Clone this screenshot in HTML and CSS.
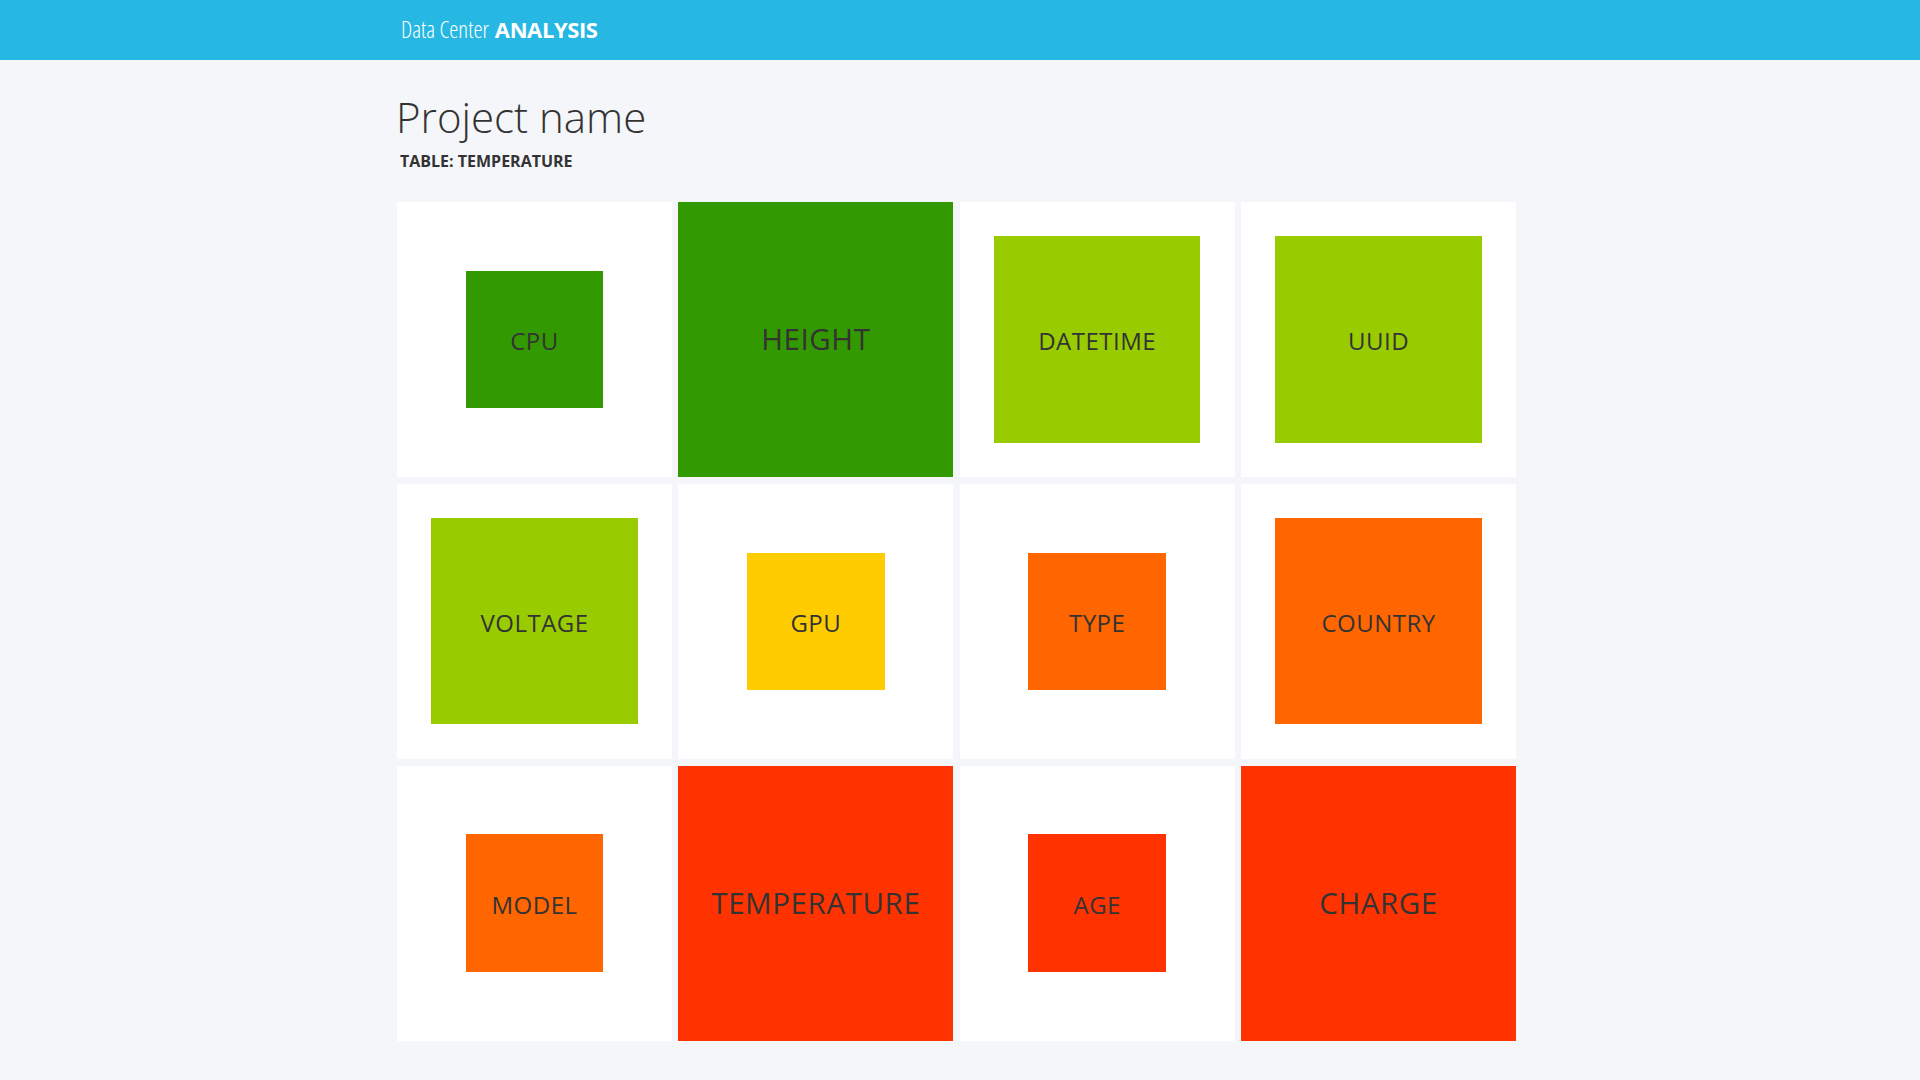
FILE: index.html
```html
<!DOCTYPE html>
<html lang="en">
<head>
<meta charset="utf-8">
<title>Data Center ANALYSIS</title>
<link rel="stylesheet" href="styles.css">
</head>
<body>
<header class="topbar">
  <div class="container">
    <span class="brand"><span class="brand-light">Data Center</span> <span class="brand-bold">ANALYSIS</span></span>
  </div>
</header>
<main class="container">
  <h1 class="title">Project name</h1>
  <div class="subtitle">TABLE: TEMPERATURE</div>
  <section class="grid">
    <div class="tile"><div class="box s50 c-green"><span>CPU</span></div></div>
    <div class="tile"><div class="box s100 c-green big"><span>HEIGHT</span></div></div>
    <div class="tile"><div class="box s75 c-lime"><span>DATETIME</span></div></div>
    <div class="tile"><div class="box s75 c-lime"><span>UUID</span></div></div>

    <div class="tile"><div class="box s75 c-lime"><span>VOLTAGE</span></div></div>
    <div class="tile"><div class="box s50 c-yellow"><span>GPU</span></div></div>
    <div class="tile"><div class="box s50 c-orange"><span>TYPE</span></div></div>
    <div class="tile"><div class="box s75 c-orange"><span>COUNTRY</span></div></div>

    <div class="tile"><div class="box s50 c-orange"><span>MODEL</span></div></div>
    <div class="tile"><div class="box s100 c-red big"><span>TEMPERATURE</span></div></div>
    <div class="tile"><div class="box s50 c-red"><span>AGE</span></div></div>
    <div class="tile"><div class="box s100 c-red big"><span>CHARGE</span></div></div>
  </section>
</main>
</body>
</html>
```

FILE: styles.css
```css
* { box-sizing: border-box; }

html, body {
  margin: 0;
  padding: 0;
}

body {
  background: #f5f6fa;
  font-family: "Open Sans", "Noto Sans", sans-serif;
  color: #333333;
}

.container {
  width: 1126px;
  margin: 0 auto;
}

.topbar {
  background: #27b7e3;
  height: 60px;
}

.topbar .container {
  height: 60px;
  display: flex;
  align-items: center;
  padding-left: 4px;
}

.brand {
  color: #ffffff;
  font-size: 23px;
  line-height: 1;
  white-space: nowrap;
  padding-bottom: 1px;
}

.brand-light {
  font-weight: 300;
  font-stretch: 75%;
}

.brand-bold {
  font-weight: 700;
  font-size: 22px;
  letter-spacing: -0.4px;
}

.title {
  margin: 36px 0 0 -1px;
  font-size: 42px;
  line-height: 42px;
  font-weight: 300;
  color: #333333;
}

.subtitle {
  margin: 16px 0 0 3px;
  font-size: 16px;
  line-height: 15px;
  font-weight: 700;
  color: #333333;
}

.grid {
  margin-top: 33px;
  width: 1119px;
  display: grid;
  grid-template-columns: repeat(4, 1fr);
  column-gap: 6.33px;
  row-gap: 6.8px;
}

.tile {
  background: #ffffff;
  aspect-ratio: 1 / 1;
  display: flex;
  align-items: center;
  justify-content: center;
}

.box {
  aspect-ratio: 1 / 1;
  display: flex;
  align-items: center;
  justify-content: center;
  font-size: 24px;
  font-weight: 400;
  color: #333333;
  letter-spacing: 0.5px;
  white-space: nowrap;
  padding-top: 2px;
}

.box.big {
  font-size: 29.5px;
  letter-spacing: 0.6px;
  padding-top: 0;
  padding-bottom: 2px;
}

.s50 { width: 50%; }
.s75 { width: 75%; }
.s100 { width: 100%; }

.c-green { background: #339900; }
.c-lime { background: #99cc00; }
.c-yellow { background: #ffcc00; }
.c-orange { background: #ff6600; }
.c-red { background: #ff3300; }
```
